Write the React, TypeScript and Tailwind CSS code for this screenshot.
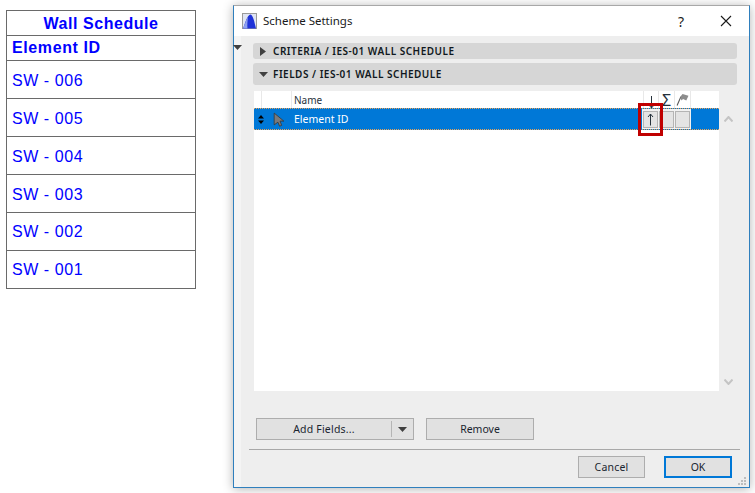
const font = { fontFamily: '"Noto Sans", "Open Sans", sans-serif' };

function Tri({ dir, className }: { dir: "down" | "right" | "up"; className?: string }) {
  const d = dir === "down" ? "M0 0H9L4.5 5Z" : dir === "right" ? "M0 0L6 4.5L0 9Z" : "M0 5H9L4.5 0Z";
  return (
    <svg width={dir === "right" ? 6 : 9} height={dir === "right" ? 9 : 5} className={className}>
      <path d={d} fill="#404040" />
    </svg>
  );
}

function Schedule() {
  const rows = ["SW - 006", "SW - 005", "SW - 004", "SW - 003", "SW - 002", "SW - 001"];
  return (
    <div className="mt-[10px] ml-[6px] w-[190px] h-[279px] shrink-0 border border-[#6a6a6a] flex flex-col text-[#0000ff] font-['Liberation_Sans',sans-serif]">
      <div className="h-[25px] shrink-0 flex items-center justify-center pt-[1px] font-bold text-[16px] tracking-[0.55px] border-b border-[#6a6a6a]">
        Wall&nbsp;Schedule
      </div>
      <div className="h-[25px] shrink-0 flex items-center pl-[5px] font-bold text-[16px] tracking-[0.6px] border-b border-[#6a6a6a]">
        Element ID
      </div>
      {rows.map((r, i) => (
        <div
          key={r}
          className={`h-[38px] shrink-0 flex items-center pl-[5px] text-[16px] tracking-[0.55px] ${i < 4 ? "pt-[2px]" : ""} ${i < 5 ? "border-b border-[#6a6a6a]" : ""}`}
        >
          {r}
        </div>
      ))}
    </div>
  );
}

function Section({ open, label, h }: { open: boolean; label: string; h: string }) {
  return (
    <div className={`${h} ml-[12px] mr-[12px] rounded-[3px] bg-[#d6d6d6] flex items-center`}>
      <span className="w-[20px] flex justify-center shrink-0">
        <Tri dir={open ? "down" : "right"} />
      </span>
      <span className="text-[10px] font-semibold text-[#101820] tracking-[0.5px]">{label}</span>
    </div>
  );
}

function Check({ children }: { children?: React.ReactNode }) {
  return (
    <div className="w-[15px] h-[17px] border-[1.5px] border-[#b4b4b4] bg-[#e4e4e4] flex items-center justify-center">
      {children}
    </div>
  );
}

function Arrow() {
  return (
    <svg width="9" height="13" viewBox="0 0 9 13">
      <path d="M4.5 12.5V1M2 4L4.5 1L7 4" fill="none" stroke="#26323c" strokeWidth="1" />
    </svg>
  );
}

function Dialog() {
  return (
    <div
      className="relative mt-[5px] ml-[37px] w-[517px] h-[483px] shrink-0 flex flex-col bg-[#eeeeee] border border-[#2f7fbd] border-t-[#a8a8a8] shadow-[0_1px_10px_rgba(0,0,0,0.3)]"
      style={font}
    >
      <div className="h-[30px] shrink-0 bg-white flex items-center text-[#1a1a1a]">
        <svg width="15" height="16" viewBox="0 0 15 16" className="ml-[8px]">
          <rect x="0.5" y="0.5" width="14" height="15" fill="#dfe4f2" stroke="#9a9a9a" />
          <path d="M1 15.5C3 11 5 2 8.5 1.5C11 2 12.5 9 14 15.5Z" fill="#1f32d8" />
          <path d="M1 15.5C3 11 4.5 6 6 4C5.5 8 5 12 5.5 15.5Z" fill="#8ea0f0" />
        </svg>
        <span className="ml-[6px] text-[11.5px]">Scheme Settings</span>
        <span className="ml-auto mr-[36px] text-[14px]">?</span>
        <svg width="12" height="12" viewBox="0 0 12 12" className="mr-[17px]">
          <path d="M1 1L11 11M11 1L1 11" stroke="#1a1a1a" strokeWidth="1.1" />
        </svg>
      </div>
      <div className="flex-1 flex flex-col relative pl-[7px]">
        <div className="absolute left-0 top-0 bottom-0 w-[7px] bg-[#f4f4f4]" />
        <Tri dir="down" className="absolute left-[-1px] top-[9px]" />
        <div className="pt-[7px] flex flex-col gap-[4px]">
          <Section open={false} label="CRITERIA / IES-01 WALL SCHEDULE" h="h-[16px]" />
          <Section open label="FIELDS / IES-01 WALL SCHEDULE" h="h-[22px]" />
        </div>
        <div className="mt-[6px] ml-[13px] mr-[30px] h-[300px] bg-white flex flex-col relative">
          <div className="h-[17px] shrink-0 flex items-center">
            <span className="w-[8px] h-full border-r border-[#e8e8e8]" />
            <span className="w-[30px] h-full border-r border-[#e8e8e8]" />
            <span className="ml-[1px] pl-[1px] pt-[2px] text-[10px] text-[#26323c]">Name</span>
            <div className="ml-auto mr-[28px] flex h-full">
              <span className="w-[16px] h-full border-x border-[#e8e8e8] flex justify-center items-end">
                <svg width="9" height="12" viewBox="0 0 9 12"><path d="M4.5 0V12" stroke="#26323c" strokeWidth="1" /><path d="M2 9L4.5 12L7 9" fill="none" stroke="#26323c" /></svg>
              </span>
              <span className="w-[16px] h-full border-r border-[#e8e8e8] flex justify-center items-center">
                <span className="text-[16px] leading-none text-[#26323c]">Σ</span>
              </span>
              <span className="w-[16px] h-full border-r border-[#e8e8e8] flex justify-center items-center">
                <svg width="13" height="13" viewBox="0 0 12 12"><path d="M1 11.5L4.5 3.5" stroke="#555" /><path d="M4 3.5L6 1L11.5 2.5L9.5 7L6.5 5.5L5 7Z" fill="#8c8c8c" /></svg>
              </span>
            </div>
          </div>
          <div className="h-[22px] shrink-0 bg-[#0078d7] border-y border-dotted border-[#e8a35a] flex items-center text-white">
            <span className="w-[8px] ml-[3px] flex flex-col items-center gap-[1px]">
              <svg width="6" height="9" viewBox="0 0 6 9"><path d="M0 3.5L3 0L6 3.5ZM0 5.5H6L3 9Z" fill="#000" /></svg>
            </span>
            <svg width="12" height="15" viewBox="0 0 11 14" className="ml-[8px]">
              <path d="M1 1L10 8.5H6.5L8 12.5L6 13.2L4.5 9.5L1 12Z" fill="#7a7a7a" stroke="#333" strokeWidth="0.7" />
            </svg>
            <span className="ml-[9px] pt-[1px] text-[10.5px]">Element ID</span>
            <div className="ml-auto mr-[28px] flex bg-[#f2f2f2] h-[20px] items-center gap-[1px] px-[1px]">
              <Check><Arrow /></Check>
              <Check />
              <Check />
            </div>
          </div>
          <div className="absolute left-[384px] top-[12px] w-[25px] h-[33px] border-[3px] border-[#c00000]" />
        </div>
        <div className="absolute right-[12px] top-[72px] h-[285px] w-[17px] flex flex-col justify-between items-center py-[8px]">
          <svg width="9" height="6" viewBox="0 0 9 6"><path d="M0.5 5.5L4.5 1L8.5 5.5" fill="none" stroke="#c4c4c4" strokeWidth="2" /></svg>
          <svg width="9" height="6" viewBox="0 0 9 6"><path d="M0.5 0.5L4.5 5L8.5 0.5" fill="none" stroke="#c4c4c4" strokeWidth="2" /></svg>
        </div>
        <div className="mt-[27px] ml-[15px] flex gap-[12px] text-[10.5px] text-[#1a2530]">
          <div className="w-[158px] h-[22px] bg-[#e1e1e1] border border-[#adadad] flex items-center">
            <span className="flex-1 text-center pt-[1px] tracking-[0.2px]">Add Fields...</span>
            <span className="w-px h-[16px] bg-[#b5b5b5]" />
            <span className="w-[21px] flex justify-center"><Tri dir="down" /></span>
          </div>
          <div className="w-[108px] h-[22px] pt-[1px] bg-[#e1e1e1] border border-[#adadad] flex items-center justify-center">Remove</div>
        </div>
        <div className="mt-[9px] ml-[8px] mr-[9px] h-px bg-[#a8a8a8]" />
        <div className="mt-[6px] flex justify-end mr-[17px] gap-[19px] text-[10.5px] text-[#1a2530]">
          <div className="w-[67px] h-[22px] pt-[1px] tracking-[0.2px] bg-[#e1e1e1] border border-[#adadad] flex items-center justify-center">Cancel</div>
          <div className="w-[68px] h-[22px] pt-[1px] bg-[#e1e1e1] border-2 border-[#0078d7] flex items-center justify-center">OK</div>
        </div>
        <svg width="9" height="9" viewBox="0 0 9 9" className="absolute right-[2px] bottom-[1px]">
          <path d="M6 0h2v2H6zM3 3h2v2H3zM6 3h2v2H6zM0 6h2v2H0zM3 6h2v2H3zM6 6h2v2H6z" fill="#bdbdbd" />
        </svg>
      </div>
    </div>
  );
}

export default function App() {
  return (
    <div className="w-[755px] h-[493px] bg-white flex items-start overflow-hidden">
      <Schedule />
      <Dialog />
    </div>
  );
}
